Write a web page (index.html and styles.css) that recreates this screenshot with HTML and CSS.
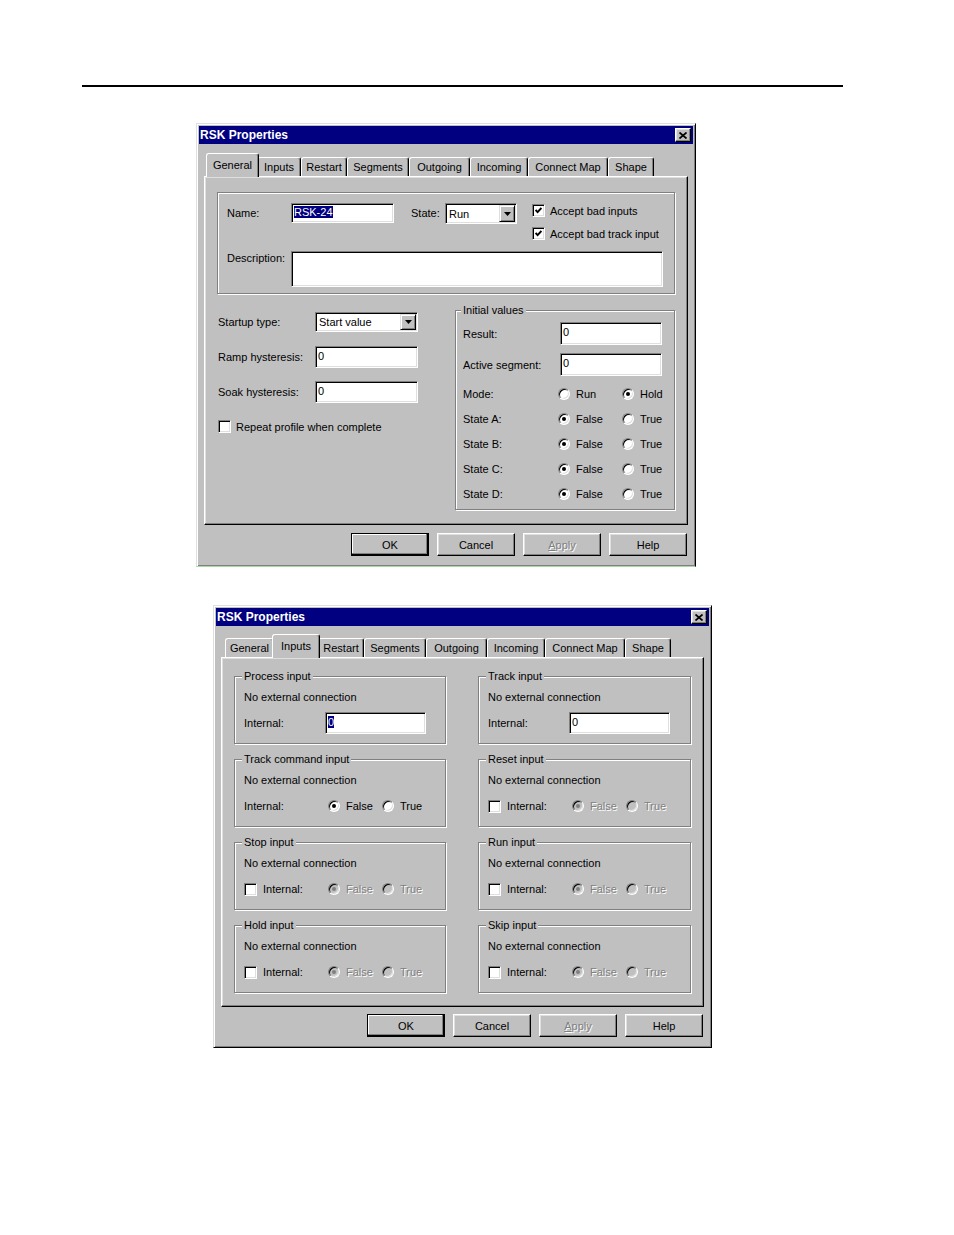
FILE: index.html
```html
<!DOCTYPE html>
<html lang="en">
<head>
    <meta charset="UTF-8">
    <title>RSK Properties</title>
    <link rel="stylesheet" href="styles.css">
</head>
<body>
<div class="page">
    <div class="rule"></div>

    <!-- General tab -->
    <div class="dialog dialog-general">
        <div class="titlebar">
            <span>RSK Properties</span>
            <span class="close-btn"><svg width="8" height="7" viewBox="0 0 8 7"><path d="M0.5 0.5 L7.5 6.5 M7.5 0.5 L0.5 6.5" stroke="#000" stroke-width="1.7" fill="none"/></svg></span>
        </div>
        <div class="tabs">
            <div class="tab t-general active">General</div>
            <div class="tab t-inputs">Inputs</div>
            <div class="tab t-restart">Restart</div>
            <div class="tab t-segments">Segments</div>
            <div class="tab t-outgoing">Outgoing</div>
            <div class="tab t-incoming">Incoming</div>
            <div class="tab t-connect">Connect Map</div>
            <div class="tab t-shape">Shape</div>
        </div>
        <div class="panel panel-general">
            <div class="etched name-group">
                <div class="name-row">
                    <span class="lbl lbl-name">Name:</span>
                    <div class="field f-name"><span class="sel">RSK-24</span></div>
                    <span class="lbl lbl-state">State:</span>
                    <div class="combo c-state">
                        <span class="combo-text">Run</span>
                        <span class="combo-btn"><svg width="7" height="4" viewBox="0 0 7 4"><polygon points="0,0 7,0 3.5,4" fill="#000"/></svg></span>
                    </div>
                    <div class="checks">
                        <div class="check-row"><span class="checkbox"><svg width="7" height="7" viewBox="0 0 7 7"><polyline points="0.6,3 2.6,5.2 6.4,1" stroke="#000" stroke-width="1.9" fill="none"/></svg></span>Accept bad inputs</div>
                        <div class="check-row"><span class="checkbox"><svg width="7" height="7" viewBox="0 0 7 7"><polyline points="0.6,3 2.6,5.2 6.4,1" stroke="#000" stroke-width="1.9" fill="none"/></svg></span>Accept bad track input</div>
                    </div>
                </div>
                <div class="desc-row">
                    <span class="lbl lbl-name">Description:</span>
                    <div class="field f-desc"></div>
                </div>
            </div>

            <div class="general-lower">
                <div class="startup-col">
                    <div class="form-row">
                        <span class="lbl-startup">Startup type:</span>
                        <div class="combo c-startup">
                            <span class="combo-text">Start value</span>
                            <span class="combo-btn"><svg width="7" height="4" viewBox="0 0 7 4"><polygon points="0,0 7,0 3.5,4" fill="#000"/></svg></span>
                        </div>
                    </div>
                    <div class="form-row row-ramp">
                        <span class="lbl-startup">Ramp hysteresis:</span>
                        <div class="field f-hyst">0</div>
                    </div>
                    <div class="form-row row-soak">
                        <span class="lbl-startup">Soak hysteresis:</span>
                        <div class="field f-hyst">0</div>
                    </div>
                    <div class="check-row repeat"><span class="checkbox"></span>Repeat profile when complete</div>
                </div>

                <div class="etched initial-group">
                    <span class="group-title">Initial values</span>
                    <div class="iv-row">
                        <span class="lbl-iv">Result:</span>
                        <div class="field f-iv">0</div>
                    </div>
                    <div class="iv-row">
                        <span class="lbl-iv">Active segment:</span>
                        <div class="field f-iv">0</div>
                    </div>
                    <div class="radio-row first">
                        <span class="lbl-radio">Mode:</span>
                        <span class="opt opt-1"><span class="radio"></span>Run</span>
                        <span class="opt"><span class="radio on"></span>Hold</span>
                    </div>
                    <div class="radio-row">
                        <span class="lbl-radio">State A:</span>
                        <span class="opt opt-1"><span class="radio on"></span>False</span>
                        <span class="opt"><span class="radio"></span>True</span>
                    </div>
                    <div class="radio-row">
                        <span class="lbl-radio">State B:</span>
                        <span class="opt opt-1"><span class="radio on"></span>False</span>
                        <span class="opt"><span class="radio"></span>True</span>
                    </div>
                    <div class="radio-row">
                        <span class="lbl-radio">State C:</span>
                        <span class="opt opt-1"><span class="radio on"></span>False</span>
                        <span class="opt"><span class="radio"></span>True</span>
                    </div>
                    <div class="radio-row">
                        <span class="lbl-radio">State D:</span>
                        <span class="opt opt-1"><span class="radio on"></span>False</span>
                        <span class="opt"><span class="radio"></span>True</span>
                    </div>
                </div>
            </div>
        </div>
        <div class="buttons">
            <div class="btn default">OK</div>
            <div class="btn">Cancel</div>
            <div class="btn"><span class="dis"><u>A</u>pply</span></div>
            <div class="btn">Help</div>
        </div>
    </div>

    <!-- Inputs tab -->
    <div class="dialog dialog-inputs">
        <div class="titlebar">
            <span>RSK Properties</span>
            <span class="close-btn"><svg width="8" height="7" viewBox="0 0 8 7"><path d="M0.5 0.5 L7.5 6.5 M7.5 0.5 L0.5 6.5" stroke="#000" stroke-width="1.7" fill="none"/></svg></span>
        </div>
        <div class="tabs">
            <div class="tab t-general">General</div>
            <div class="tab t-inputs active">Inputs</div>
            <div class="tab t-restart">Restart</div>
            <div class="tab t-segments">Segments</div>
            <div class="tab t-outgoing">Outgoing</div>
            <div class="tab t-incoming">Incoming</div>
            <div class="tab t-connect">Connect Map</div>
            <div class="tab t-shape">Shape</div>
        </div>
        <div class="panel panel-inputs">
            <div class="etched input-group">
                <span class="group-title">Process input</span>
                <div class="nec">No external connection</div>
                <div class="int-row">
                    <span class="lbl-int">Internal:</span>
                    <div class="field f-int"><span class="sel">0</span></div>
                </div>
            </div>
            <div class="etched input-group">
                <span class="group-title">Track input</span>
                <div class="nec">No external connection</div>
                <div class="int-row">
                    <span class="lbl-int">Internal:</span>
                    <div class="field f-int">0</div>
                </div>
            </div>

            <div class="etched input-group">
                <span class="group-title">Track command input</span>
                <div class="nec">No external connection</div>
                <div class="int-row">
                    <span class="int-lead">Internal:</span>
                    <span class="opt opt-false"><span class="radio on"></span>False</span>
                    <span class="opt"><span class="radio"></span>True</span>
                </div>
            </div>
            <div class="etched input-group">
                <span class="group-title">Reset input</span>
                <div class="nec">No external connection</div>
                <div class="int-row">
                    <span class="int-lead"><span class="checkbox"></span>Internal:</span>
                    <span class="opt opt-false dis"><span class="radio disabled on"></span>False</span>
                    <span class="opt dis"><span class="radio disabled"></span>True</span>
                </div>
            </div>

            <div class="etched input-group">
                <span class="group-title">Stop input</span>
                <div class="nec">No external connection</div>
                <div class="int-row">
                    <span class="int-lead"><span class="checkbox"></span>Internal:</span>
                    <span class="opt opt-false dis"><span class="radio disabled on"></span>False</span>
                    <span class="opt dis"><span class="radio disabled"></span>True</span>
                </div>
            </div>
            <div class="etched input-group">
                <span class="group-title">Run input</span>
                <div class="nec">No external connection</div>
                <div class="int-row">
                    <span class="int-lead"><span class="checkbox"></span>Internal:</span>
                    <span class="opt opt-false dis"><span class="radio disabled on"></span>False</span>
                    <span class="opt dis"><span class="radio disabled"></span>True</span>
                </div>
            </div>

            <div class="etched input-group">
                <span class="group-title">Hold input</span>
                <div class="nec">No external connection</div>
                <div class="int-row">
                    <span class="int-lead"><span class="checkbox"></span>Internal:</span>
                    <span class="opt opt-false dis"><span class="radio disabled on"></span>False</span>
                    <span class="opt dis"><span class="radio disabled"></span>True</span>
                </div>
            </div>
            <div class="etched input-group">
                <span class="group-title">Skip input</span>
                <div class="nec">No external connection</div>
                <div class="int-row">
                    <span class="int-lead"><span class="checkbox"></span>Internal:</span>
                    <span class="opt opt-false dis"><span class="radio disabled on"></span>False</span>
                    <span class="opt dis"><span class="radio disabled"></span>True</span>
                </div>
            </div>
        </div>
        <div class="buttons">
            <div class="btn default">OK</div>
            <div class="btn">Cancel</div>
            <div class="btn"><span class="dis"><u>A</u>pply</span></div>
            <div class="btn">Help</div>
        </div>
    </div>
</div>
</body>
</html>
```

FILE: styles.css
```css
* {
    box-sizing: border-box;
}

body {
    margin: 0;
    background: #fff;
    font-family: "Liberation Sans", Arial, sans-serif;
    font-size: 11px;
    color: #000;
}

.page {
    width: 954px;
    height: 1235px;
    overflow: hidden;
}

.rule {
    margin: 85px 0 0 82px;
    width: 761px;
    height: 2px;
    background: #000;
}

/* dialog frame */
.dialog {
    display: flex;
    flex-direction: column;
    background: #c0c0c0;
    border: 1px solid;
    border-color: #dfdfdf #000 #000 #dfdfdf;
    box-shadow: inset 1px 1px 0 #fff, inset -1px -1px 0 #808080;
    padding: 2px;
}

.dialog-general {
    margin: 36px 0 0 196px;
    width: 500px;
    height: 444px;
    border-bottom-color: #a8d8a8;
}

.dialog-inputs {
    margin: 38px 0 0 213px;
    width: 499px;
    height: 443px;
}

.titlebar {
    height: 18px;
    flex: none;
    background: #000080;
    color: #fff;
    font-size: 12px;
    font-weight: bold;
    display: flex;
    align-items: center;
    justify-content: space-between;
    padding: 0 2px 0 1px;
}

.close-btn {
    width: 16px;
    height: 14px;
    background: #c0c0c0;
    border: 1px solid;
    border-color: #fff #000 #000 #fff;
    box-shadow: inset -1px -1px 0 #808080, inset 1px 1px 0 #dfdfdf;
    display: flex;
    align-items: center;
    justify-content: center;
}

/* tabs */
.tabs {
    height: 32px;
    flex: none;
    display: flex;
    align-items: flex-end;
    padding-left: 9px;
}

.dialog-inputs .tabs {
    height: 31px;
}

.tab {
    box-sizing: content-box;
    height: 16px;
    padding: 2px 0 0;
    line-height: 14px;
    text-align: center;
    white-space: nowrap;
    background: #c0c0c0;
    border: 1px solid;
    border-bottom: none;
    border-color: #fff #000 #000 #fff;
    border-radius: 3px 3px 0 0;
    box-shadow: inset -1px 0 0 #808080;
}

.tab.active {
    height: 19px;
    padding: 4px 2px 0;
    margin: 0 -2px -1px;
    position: relative;
    z-index: 1;
}

.t-general { width: 47px; }
.t-inputs { width: 42px; }
.t-restart { width: 44px; }
.t-segments { width: 60px; }
.t-outgoing { width: 59px; }
.t-incoming { width: 56px; }
.t-connect { width: 78px; }
.t-shape { width: 44px; }

.panel {
    flex: none;
    margin: 0 5px;
    border: 1px solid;
    border-color: #fff #000 #000 #fff;
    box-shadow: inset -1px -1px 0 #808080, inset 1px 1px 0 #dfdfdf;
}

/* common controls */
.etched {
    position: relative;
    border: 1px solid #808080;
    box-shadow: inset 1px 1px 0 #fff, 1px 1px 0 #fff;
}

.group-title {
    position: absolute;
    top: -7px;
    left: 7px;
    padding: 0 2px;
    line-height: 13px;
    background: #c0c0c0;
    white-space: nowrap;
}

.field {
    background: #fff;
    border: 1px solid;
    border-color: #808080 #fff #fff #808080;
    box-shadow: inset 1px 1px 0 #000, inset -1px -1px 0 #dfdfdf;
    padding: 2px 2px 0;
    line-height: 14px;
    flex: none;
}

.sel {
    background: #000080;
    color: #fff;
}

.combo {
    display: flex;
    flex: none;
    background: #fff;
    border: 1px solid;
    border-color: #808080 #fff #fff #808080;
    box-shadow: inset 1px 1px 0 #000, inset -1px -1px 0 #dfdfdf;
    padding: 1px;
}

.combo-text {
    flex: 1;
    padding-left: 2px;
    display: flex;
    align-items: center;
}

.combo-btn {
    width: 16px;
    background: #c0c0c0;
    border: 1px solid;
    border-color: #dfdfdf #000 #000 #dfdfdf;
    box-shadow: inset 1px 1px 0 #fff, inset -1px -1px 0 #808080;
    display: flex;
    align-items: center;
    justify-content: center;
}

.checkbox {
    width: 13px;
    height: 13px;
    flex: none;
    background: #fff;
    border: 1px solid;
    border-color: #808080 #fff #fff #808080;
    box-shadow: inset 1px 1px 0 #000, inset -1px -1px 0 #dfdfdf;
    display: flex;
    align-items: center;
    justify-content: center;
}

.radio {
    width: 12px;
    height: 12px;
    flex: none;
    border-radius: 50%;
    background: #fff;
    border: 1px solid;
    border-color: #808080 #fff #fff #808080;
    box-shadow: inset 1px 1px 0 #000, inset -1px -1px 0 #dfdfdf;
    display: flex;
    align-items: center;
    justify-content: center;
}

.radio.on::after {
    content: "";
    width: 4px;
    height: 4px;
    border-radius: 50%;
    background: #000;
}

.radio.disabled {
    background: #c0c0c0;
}

.radio.disabled.on::after {
    background: #808080;
}

.dis {
    color: #808080;
    text-shadow: 1px 1px 0 #fff;
}

.check-row {
    display: flex;
    align-items: center;
    gap: 5px;
    height: 13px;
    white-space: nowrap;
}

.opt {
    display: flex;
    align-items: center;
    gap: 6px;
}

/* buttons */
.buttons {
    display: flex;
    justify-content: flex-end;
    gap: 8px;
    padding-right: 6px;
    margin-top: 8px;
}

.dialog-inputs .buttons {
    margin-top: 7px;
}

.btn {
    width: 78px;
    height: 23px;
    border: 1px solid;
    border-color: #fff #000 #000 #fff;
    box-shadow: inset -1px -1px 0 #808080, inset 1px 1px 0 #dfdfdf;
    display: flex;
    align-items: center;
    justify-content: center;
}

.btn.default {
    border-color: #000;
    box-shadow: inset -1px -1px 0 #000, inset -2px -2px 0 #808080, inset 1px 1px 0 #fff;
}

/* general page */
.panel-general {
    height: 349px;
    padding: 15px 0 0 12px;
}

.name-group {
    width: 458px;
    height: 102px;
    padding: 10px 0 0 9px;
}

.name-row {
    display: flex;
    height: 48px;
}

.lbl {
    line-height: 20px;
    flex: none;
}

.lbl-name { width: 64px; }

.f-name {
    width: 103px;
    height: 20px;
    padding-top: 1px;
}

.lbl-state {
    width: 34px;
    margin-left: 17px;
}

.c-state {
    width: 72px;
    height: 21px;
}

.checks {
    margin: 1px 0 0 15px;
    display: flex;
    flex-direction: column;
    gap: 10px;
}

.desc-row {
    display: flex;
}

.desc-row .lbl {
    line-height: 14px;
}

.f-desc {
    width: 372px;
    height: 36px;
}

.general-lower {
    display: flex;
    margin-top: 16px;
}

.startup-col {
    width: 238px;
    padding-top: 2px;
    display: flex;
    flex-direction: column;
}

.form-row {
    display: flex;
    align-items: center;
}

.lbl-startup {
    width: 98px;
    padding-left: 1px;
}

.c-startup {
    width: 103px;
    height: 20px;
}

.f-hyst {
    width: 103px;
    height: 22px;
}

.row-ramp { margin-top: 14px; }
.row-soak { margin-top: 13px; }

.repeat {
    margin-top: 17px;
    padding-left: 1px;
}

.initial-group {
    width: 220px;
    height: 200px;
    padding: 11px 0 0 7px;
}

.initial-group .group-title {
    left: 5px;
}

.iv-row {
    display: flex;
    align-items: center;
}

.iv-row + .iv-row { margin-top: 8px; }

.lbl-iv { width: 97px; }

.f-iv {
    width: 102px;
    height: 23px;
}

.radio-row {
    display: flex;
    align-items: center;
    height: 16px;
    margin-top: 9px;
}

.radio-row.first { margin-top: 10px; }

.lbl-radio { width: 95px; }

.opt-1 { width: 64px; }

/* inputs page */
.panel-inputs {
    height: 350px;
    padding: 18px 0 0 12px;
    display: grid;
    grid-template-columns: 212px 213px;
    column-gap: 32px;
    row-gap: 15px;
    align-content: start;
}

.input-group {
    height: 68px;
    padding: 12px 0 0 9px;
}

.nec {
    height: 16px;
    line-height: 16px;
}

.int-row {
    display: flex;
    align-items: center;
    height: 22px;
    margin-top: 7px;
}

.lbl-int { width: 81px; }

.f-int {
    width: 101px;
    height: 22px;
}

.int-lead {
    width: 84px;
    display: flex;
    align-items: center;
    gap: 6px;
}

.opt-false { width: 54px; }
```
